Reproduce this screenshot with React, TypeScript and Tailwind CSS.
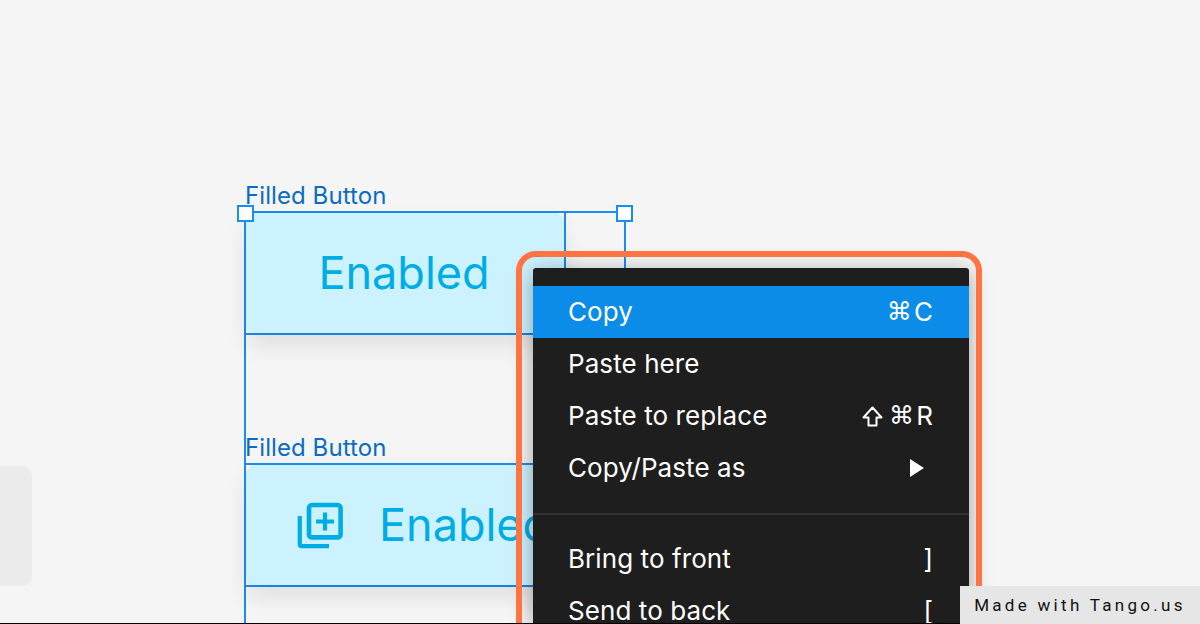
import { ReactNode } from 'react'

const Handle = ({ className }: { className: string }) => (
  <div className={`absolute h-[17px] w-[17px] border-2 border-[#1a8df0] bg-white ${className}`} />
)

const AddIcon = () => (
  <svg width="48" height="48" viewBox="0 0 48 48" fill="none" stroke="#00ace6" className="mt-[2px] shrink-0">
    <rect x="12" y="3" width="31.6" height="32.4" rx="3" strokeWidth="4.6" />
    <path d="M28 10.5v18M19 19.5h18" strokeWidth="4.2" />
    <path d="M2.8 14v28.2a2 2 0 0 0 2 2H32" strokeWidth="4.2" />
  </svg>
)

const ShiftIcon = () => (
  <svg width="21" height="21" viewBox="0 0 21 21" fill="none" stroke="white" strokeWidth="2" strokeLinejoin="round">
    <path d="M10.5 1.5 1.5 11.5H6.5V19.5h8v-8h5z" />
  </svg>
)

const Row = ({ label, right, active }: { label: string; right?: ReactNode; active?: boolean }) => (
  <div className={`flex h-[52px] items-center justify-between pl-[35px] pr-[36px] text-[26px] leading-[26px] tracking-[0.08px] ${active ? 'bg-[#0b8ce9]' : ''}`}>
    <span>{label}</span>
    {right}
  </div>
)

const Label = ({ className }: { className: string }) => (
  <span className={`h-[30px] text-[24px] leading-[30px] tracking-[0.08px] text-[#0a6cc2] ${className}`}>Filled Button</span>
)

const FilledButton = ({ children, className }: { children: ReactNode; className: string }) => (
  <div className="h-[122px] border-b-2 border-r-2 border-[#1a8df0]">
    <div className={`flex h-[120px] items-center rounded-[10px] bg-[#ccf2ff] text-[45px] text-[#00ace6] shadow-[0_12px_24px_rgba(0,0,0,0.09)] ${className}`}>
      {children}
    </div>
  </div>
)

const Keys = ({ letter }: { letter: string }) => (
  <span className="flex items-center gap-[2px]">
    <span className="font-['DejaVu_Sans',sans-serif] text-[25px]">⌘</span>
    {letter}
  </span>
)

export default function App() {
  return (
    <div className="relative h-[624px] w-[1200px] overflow-hidden bg-[#f5f5f5] font-['Inter',sans-serif]">
      {/* side panel edge */}
      <div className="absolute left-0 top-[466px] h-[120px] w-[31.5px] rounded-r-[11px] bg-[#ebebeb]" />

      {/* canvas component set */}
      <div className="absolute left-[244px] top-[181px] flex h-[443px] w-[382px] flex-col">
        <Label className="pl-[1px]" />
        <div className="flex flex-1 flex-col border-x-2 border-t-2 border-[#1a8df0]">
          <div className="flex w-[320px] flex-col">
            <FilledButton className="justify-center pb-[1px] pr-[2px]">Enabled</FilledButton>
            <div className="mt-[98px] flex flex-col">
              <Label className="-ml-[1px]" />
              <div className="h-[2px] w-[320px] bg-[#1a8df0]" />
            </div>
            <FilledButton className="gap-[34px] pl-[51px]">
              <AddIcon />
              Enabled
            </FilledButton>
          </div>
        </div>
      </div>
      <Handle className="left-[237px] top-[205px]" />
      <Handle className="left-[616px] top-[205px]" />

      {/* context menu */}
      <div className="absolute left-[533px] top-[268px] h-[356px] w-[436px] overflow-hidden rounded-t-[3px] bg-[#1e1e1e] pt-[18px] text-white shadow-[0_4px_22px_rgba(0,0,0,0.35)]">
        <Row label="Copy" active right={<Keys letter="C" />} />
        <Row label="Paste here" />
        <Row
          label="Paste to replace"
          right={
            <span className="flex items-center gap-[6px]">
              <ShiftIcon />
              <Keys letter="R" />
            </span>
          }
        />
        <Row
          label="Copy/Paste as"
          right={
            <svg width="14" height="18" viewBox="0 0 14 18" className="mr-[9px]">
              <path d="M0 0 14 9 0 18z" fill="white" />
            </svg>
          }
        />
        <div className="mb-[18px] mt-[19px] h-[2px] bg-[#333333]" />
        <Row label="Bring to front" right={<span>]</span>} />
        <Row label="Send to back" right={<span>[</span>} />
      </div>

      {/* highlight */}
      <div className="absolute left-[516px] top-[251px] h-[400px] w-[466px] rounded-[20px] border-[6px] border-[#ff7442]" />

      {/* tango badge */}
      <div className="absolute bottom-0 right-0 flex h-[38px] w-[240px] items-center justify-center bg-[#e6e6e6] pt-[1px] font-['Roboto',sans-serif] text-[17px] tracking-[3.3px] text-[#111111]">
        Made with Tango.us
      </div>
      <div className="absolute bottom-0 left-0 h-[1px] w-[960px] bg-black" />
    </div>
  )
}
